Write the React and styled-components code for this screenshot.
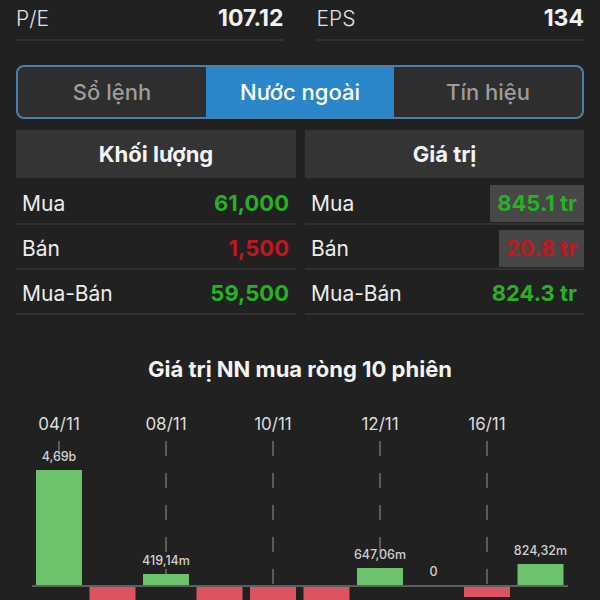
import React from "react";
import styled, { createGlobalStyle } from "styled-components";

const GlobalStyle = createGlobalStyle`
  html, body {
    margin: 0;
    padding: 0;
    background: #212121;
  }
  body {
    font-family: Inter, "Noto Sans", sans-serif;
    color: #ffffff;
  }
`;

const stats = [
  { label: "P/E", value: "107.12" },
  { label: "EPS", value: "134" },
];

const tabs = ["Sổ lệnh", "Nước ngoài", "Tín hiệu"];

const volume = [
  { label: "Mua", value: "61,000", tone: "up" },
  { label: "Bán", value: "1,500", tone: "down" },
  { label: "Mua-Bán", value: "59,500", tone: "up" },
];

const amount = [
  { label: "Mua", value: "845.1 tr", tone: "up", boxed: true },
  { label: "Bán", value: "20.8 tr", tone: "down", boxed: true },
  { label: "Mua-Bán", value: "824.3 tr", tone: "up" },
];

// heights are px on the chart, measured from the zero line
const sessions = [
  { date: "04/11", h: 115, label: "4,69b" },
  { h: -20 },
  { date: "08/11", h: 11, label: "419,14m" },
  { h: -20 },
  { date: "10/11", h: -20 },
  { h: -20 },
  { date: "12/11", h: 17, label: "647,06m" },
  { h: 0, label: "0" },
  { date: "16/11", h: -10 },
  { h: 21, label: "824,32m" },
];

const ZERO = 586;
const SLOT = 53.5;
const BAR_W = 46;
const FIRST_X = 36;

function NetChart() {
  return (
    <ChartSvg width="600" height="205" viewBox="0 395 600 205">
      {sessions.map((s, i) => {
        if (!s.date) return null;
        const cx = FIRST_X + SLOT * i + BAR_W / 2;
        return (
          <g key={"d" + i}>
            <text
              x={cx}
              y={430}
              textAnchor="middle"
              fontSize="17"
              fill="#dcdcdc"
            >
              {s.date}
            </text>
            <line
              x1={cx}
              x2={cx}
              y1={441}
              y2={620}
              stroke="#5a5a5a"
              strokeWidth="2"
              strokeDasharray="15 17"
            />
          </g>
        );
      })}
      <rect x="32" y={ZERO - 1} width="536" height="2" fill="#5e5e5e" />
      {sessions.map((s, i) => {
        const x = FIRST_X + SLOT * i;
        if (s.h > 0)
          return (
            <rect key={"b" + i} x={x} y={ZERO - 1 - s.h} width={BAR_W} height={s.h} fill="#6cc36b" />
          );
        if (s.h < 0)
          return (
            <rect key={"b" + i} x={x} y={ZERO + 1} width={BAR_W} height={-s.h} fill="#dc5461" />
          );
        return null;
      })}
      {sessions.map((s, i) => {
        if (!s.label) return null;
        const cx = FIRST_X + SLOT * i + BAR_W / 2;
        const top = ZERO - 1 - s.h;
        return (
          <text
            key={"l" + i}
            x={cx}
            y={top - 9}
            textAnchor="middle"
            fontSize="12.5"
            fontWeight="500"
            fill="#cfcfcf"
          >
            {s.label}
          </text>
        );
      })}
    </ChartSvg>
  );
}

function DataTable({ title, rows }) {
  return (
    <Table>
      <TableHead>{title}</TableHead>
      {rows.map((r) => (
        <Row key={r.label}>
          <RowLabel>{r.label}</RowLabel>
          <RowValue $tone={r.tone} $boxed={r.boxed}>
            {r.value}
          </RowValue>
        </Row>
      ))}
    </Table>
  );
}

export default function App() {
  return (
    <Page>
      <GlobalStyle />
      <StatsRow>
        {stats.map((s) => (
          <Stat key={s.label}>
            <StatLabel>{s.label}</StatLabel>
            <StatValue>{s.value}</StatValue>
          </Stat>
        ))}
      </StatsRow>

      <Tabs>
        {tabs.map((t) => (
          <Tab key={t} $active={t === "Nước ngoài"}>
            {t}
          </Tab>
        ))}
      </Tabs>

      <Tables>
        <DataTable title="Khối lượng" rows={volume} />
        <DataTable title="Giá trị" rows={amount} />
      </Tables>

      <ChartTitle>Giá trị NN mua ròng 10 phiên</ChartTitle>
      <NetChart />
    </Page>
  );
}

const Page = styled.div`
  width: 600px;
  height: 600px;
  overflow: hidden;
  background: #212121;
`;

const StatsRow = styled.div`
  display: grid;
  grid-template-columns: 1fr 1fr;
  column-gap: 33px;
  padding: 0 16px;
`;

const Stat = styled.div`
  display: flex;
  justify-content: space-between;
  align-items: center;
  height: 36px;
  padding-bottom: 3px;
  border-bottom: 2px solid #313131;
`;

const StatLabel = styled.span`
  font-size: 21px;
  font-weight: 300;
  color: #e0e0e0;
`;

const StatValue = styled.span`
  font-size: 23px;
  font-weight: 700;
  color: #f2f2f2;
`;

const Tabs = styled.div`
  margin: 24px 16px 0;
  height: 50px;
  display: grid;
  grid-template-columns: repeat(3, 1fr);
  border: 2px solid #4a80a8;
  border-radius: 8px;
  overflow: hidden;
  background: #2e2e2e;
`;

const Tab = styled.div`
  display: flex;
  align-items: center;
  justify-content: center;
  font-size: 22px;
  font-weight: 500;
  color: ${(p) => (p.$active ? "#ffffff" : "#9c9c9c")};
  background: ${(p) => (p.$active ? "#2a86c9" : "transparent")};
`;

const Tables = styled.div`
  display: grid;
  grid-template-columns: 280px 1fr;
  column-gap: 9px;
  margin: 11px 16px 0;
`;

const Table = styled.div`
  display: flex;
  flex-direction: column;
`;

const TableHead = styled.div`
  height: 48px;
  display: flex;
  align-items: center;
  justify-content: center;
  background: #343434;
  font-size: 22px;
  font-weight: 700;
  color: #f4f4f4;
  margin-bottom: 2px;
`;

const Row = styled.div`
  height: 40px;
  padding-top: 3px;
  display: flex;
  align-items: center;
  justify-content: space-between;
  padding-left: 6px;
  border-bottom: 2px solid #313131;
`;

const RowLabel = styled.span`
  font-size: 21px;
  color: #ececec;
`;

const RowValue = styled.span`
  height: 37px;
  display: flex;
  align-items: center;
  padding: 0 7px;
  font-size: 22px;
  font-weight: 700;
  color: ${(p) => (p.$tone === "up" ? "#26b126" : "#c4161d")};
  background: ${(p) => (p.$boxed ? "#474747" : "transparent")};
`;

const ChartTitle = styled.div`
  margin-top: 42px;
  height: 24px;
  line-height: 24px;
  text-align: center;
  font-size: 22px;
  font-weight: 700;
  color: #f4f4f4;
`;

const ChartSvg = styled.svg`
  display: block;
  margin-top: 14px;
  font-family: Inter, "Noto Sans", sans-serif;
`;
